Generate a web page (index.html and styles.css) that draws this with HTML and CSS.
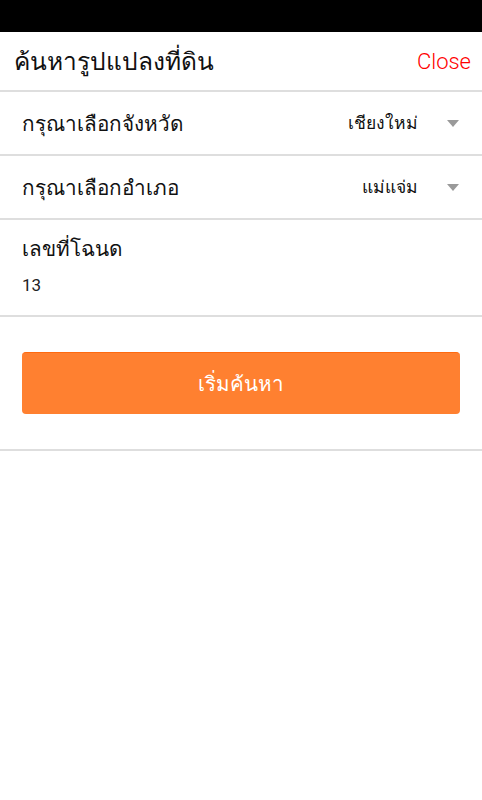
FILE: index.html
```html
<!DOCTYPE html>
<html lang="th">
<head>
<meta charset="utf-8">
<link rel="stylesheet" href="styles.css">
</head>
<body>
<div class="status"></div>
<header class="header">
  <h1 class="title">ค้นหารูปแปลงที่ดิน</h1>
  <span class="close">Close</span>
</header>
<div class="row select">
  <span class="label">กรุณาเลือกจังหวัด</span>
  <span class="value">เชียงใหม่</span>
  <span class="caret"></span>
</div>
<div class="row select">
  <span class="label">กรุณาเลือกอำเภอ</span>
  <span class="value">แม่แจ่ม</span>
  <span class="caret"></span>
</div>
<div class="row field">
  <span class="label">เลขที่โฉนด</span>
  <span class="input">13</span>
</div>
<div class="actions">
  <button class="btn">เริ่มค้นหา</button>
</div>
</body>
</html>
```
FILE: styles.css
```css
html, body {
  margin: 0;
  padding: 0;
  background: #fff;
  font-family: "Noto Sans", "DejaVu Sans", sans-serif;
  color: #111;
}
.status {
  height: 32px;
  background: #000;
}
.header {
  height: 58px;
  display: flex;
  align-items: center;
  justify-content: space-between;
  padding: 0 11px 0 14px;
  border-bottom: 2px solid #dedede;
}
.title {
  margin: 0;
  font-size: 24.5px;
  font-weight: 300;
  color: #111;
}
.close {
  font-family: Roboto, "Liberation Sans", sans-serif;
  font-weight: 300;
  font-size: 22px;
  color: #ff0000;
}
.row {
  border-bottom: 2px solid #dedede;
  padding: 0 22px;
}
.select {
  height: 62px;
  display: flex;
  align-items: center;
}
.select .label {
  flex: 1;
  font-size: 20.7px;
  font-weight: 300;
}
.select .value {
  font-size: 17.5px;
  font-weight: 300;
  margin-right: 29px;
}
.caret {
  width: 0;
  height: 0;
  border-left: 6px solid transparent;
  border-right: 6px solid transparent;
  border-top: 7px solid #9a9a9a;
  margin-right: 1px;
}
.field {
  height: 95px;
  display: flex;
  flex-direction: column;
  padding-top: 0;
}
.field .label {
  font-size: 20.7px;
  font-weight: 300;
  line-height: 28px;
  margin-top: 14px;
}
.field .input {
  font-family: Roboto, "Liberation Sans", sans-serif;
  font-size: 17px;
  line-height: 24px;
  margin-top: 11px;
  color: #222;
}
.actions {
  padding: 35px 22px;
  border-bottom: 2px solid #dedede;
}
.btn {
  display: block;
  width: 100%;
  height: 62px;
  border: 0;
  border-top: 1px solid #ff6a10;
  border-radius: 4px;
  background: #ff8030;
  color: #fff;
  font-family: "Noto Sans", "DejaVu Sans", sans-serif;
  font-size: 20.5px;
  font-weight: 300;
  padding: 0;
}
```
